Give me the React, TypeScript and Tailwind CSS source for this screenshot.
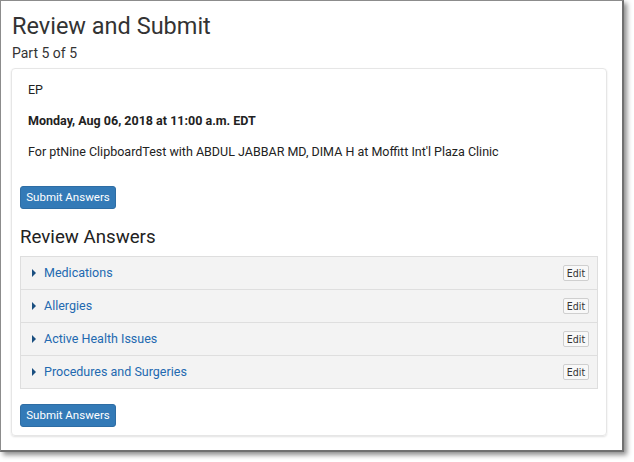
import React from "react";

const rows = ["Medications", "Allergies", "Active Health Issues", "Procedures and Surgeries"];

function SubmitButton() {
  return (
    <button className="h-[23px] w-[96px] rounded-[3px] border border-[#2e6da4] bg-[#337ab7] text-[11.5px] leading-[21px] text-white">
      Submit Answers
    </button>
  );
}

export default function App() {
  return (
    <div className="h-[462px] w-[634px] bg-white" style={{ fontFamily: "Roboto, 'Liberation Sans', sans-serif" }}>
      <div className="h-[452px] w-[624px] border-t border-l border-r-2 border-b-2 border-t-[#8c8c8c] border-l-[#8c8c8c] border-r-[#707070] border-b-[#707070] bg-white pl-[10px] pt-[12px] shadow-[3px_3px_5px_rgba(0,0,0,0.45)]">
        <h1 className="pl-[1px] text-[23.5px] leading-[27px] text-[#333]">Review and Submit</h1>
        <div className="mt-[4px] pl-[1px] text-[14px] leading-[18px] text-[#333]">Part 5 of 5</div>
        <div className="mt-[6px] w-[596px] rounded-[4px] border border-[#e6e6e6] p-2 shadow-[0_1px_2px_rgba(0,0,0,0.12)]">
          <div className="px-2 pt-[4px] text-[12.5px] leading-[18px] text-[#222]">
            <p>EP</p>
            <p className="mt-[13px] font-bold">Monday, Aug 06, 2018 at 11:00 a.m. EDT</p>
            <p className="mt-[13px]">For ptNine ClipboardTest with ABDUL JABBAR MD, DIMA H at Moffitt Int'l Plaza Clinic</p>
          </div>
          <div className="mt-[25px] flex">
            <SubmitButton />
          </div>
          <h2 className="mt-[18px] text-[18.7px] leading-[21px] text-[#222]">Review Answers</h2>
          <div className="mt-[8px] border border-[#dedede]">
            {rows.map((r, i) => (
              <div
                key={r}
                className={`flex h-[32px] items-center bg-[#f3f3f3] pl-[10px] pr-[8px] ${i > 0 ? "h-[33px] border-t border-[#dedede]" : ""}`}
              >
                <span className="ml-[1px] inline-block h-0 w-0 border-y-[4px] border-l-[4px] border-y-transparent border-l-[#1a4f80]" />
                <span className="ml-[8px] text-[12.5px] text-[#2269b0]">{r}</span>
                <button
                  className="ml-auto h-[16px] w-[26px] rounded-[2px] border border-[#cfcfcf] bg-[#f8f8f8] text-[10.5px] leading-[14px] text-[#333]"
                  style={{ fontFamily: "'DejaVu Sans Condensed', 'DejaVu Sans', sans-serif" }}
                >
                  Edit
                </button>
              </div>
            ))}
          </div>
          <div className="mt-[15px] flex">
            <SubmitButton />
          </div>
        </div>
      </div>
    </div>
  );
}
